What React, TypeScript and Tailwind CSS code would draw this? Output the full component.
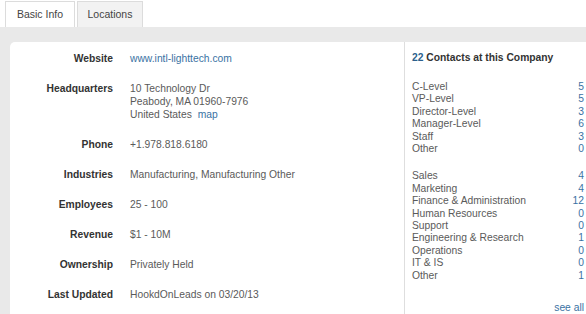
const rows: { label: string; lines: React.ReactNode[] }[] = [
  { label: "Website", lines: [<a className="text-[#3a72a3]">www.intl-lighttech.com</a>] },
  {
    label: "Headquarters",
    lines: [
      "10 Technology Dr",
      "Peabody, MA 01960-7976",
      <span>
        United States <a className="ml-[3px] text-[#3a72a3]">map</a>
      </span>,
    ],
  },
  { label: "Phone", lines: ["+1.978.818.6180"] },
  { label: "Industries", lines: ["Manufacturing, Manufacturing Other"] },
  { label: "Employees", lines: ["25 - 100"] },
  { label: "Revenue", lines: ["$1 - 10M"] },
  { label: "Ownership", lines: ["Privately Held"] },
  { label: "Last Updated", lines: ["HookdOnLeads on 03/20/13"] },
];

const levels: [string, number][] = [
  ["C-Level", 5],
  ["VP-Level", 5],
  ["Director-Level", 3],
  ["Manager-Level", 6],
  ["Staff", 3],
  ["Other", 0],
];

const departments: [string, number][] = [
  ["Sales", 4],
  ["Marketing", 4],
  ["Finance & Administration", 12],
  ["Human Resources", 0],
  ["Support", 0],
  ["Engineering & Research", 1],
  ["Operations", 0],
  ["IT & IS", 0],
  ["Other", 1],
];

function CountList({ items }: { items: [string, number][] }) {
  return (
    <div className="flex flex-col">
      {items.map(([name, n], i) => (
        <div key={i} className="flex justify-between leading-[12.4px]">
          <span className="text-[#5a5a5a]">{name}</span>
          <span className="text-[#3a72a3]">{n}</span>
        </div>
      ))}
    </div>
  );
}

export default function App() {
  return (
    <div className="w-[586px] h-[314px] overflow-hidden bg-white font-['Liberation_Sans',Arial,sans-serif] text-[10.3px]">
      {/* Tabs */}
      <div className="flex h-[27px] items-end gap-[2px] pl-[5px]">
        <div className="flex h-[26px] w-[70px] items-center justify-center border border-b-0 border-[#dcdcdc] bg-white text-[10.5px] text-[#444]">
          Basic Info
        </div>
        <div className="flex h-[26px] w-[66px] items-center justify-center border border-b-0 border-[#dcdcdc] bg-[#f2f2f2] text-[10.5px] text-[#444]">
          Locations
        </div>
      </div>

      {/* Body */}
      <div className="h-[287px] bg-[#e9e9e9] pl-[10px] pt-[15px]">
        <div className="flex h-full rounded-tl-[5px] bg-white">
          {/* Left column */}
          <div className="flex w-[394px] flex-col gap-[17px] pt-[10px]">
            {rows.map((r) => (
              <div key={r.label} className="flex">
                <div className="w-[103px] text-right font-bold leading-[13px] text-[#333]">{r.label}</div>
                <div className="ml-[17px] flex flex-col leading-[13px] text-[#5a5a5a]">
                  {r.lines.map((l, i) => (
                    <div key={i}>{l}</div>
                  ))}
                </div>
              </div>
            ))}
          </div>

          {/* Right column */}
          <div className="flex flex-1 flex-col self-start border-l border-[#dedede] pl-[7px] pr-[2px] pt-[9px]">
            <div className="font-bold leading-[13px] text-[#333]">
              <span className="text-[#2d5f8c]">22</span> Contacts at this Company
            </div>
            <div className="mt-[17px]">
              <CountList items={levels} />
            </div>
            <div className="mt-[15px]">
              <CountList items={departments} />
            </div>
            <div className="mt-[19px] text-right leading-[13px] text-[#3a72a3]">see all</div>
          </div>
        </div>
      </div>
    </div>
  );
}
